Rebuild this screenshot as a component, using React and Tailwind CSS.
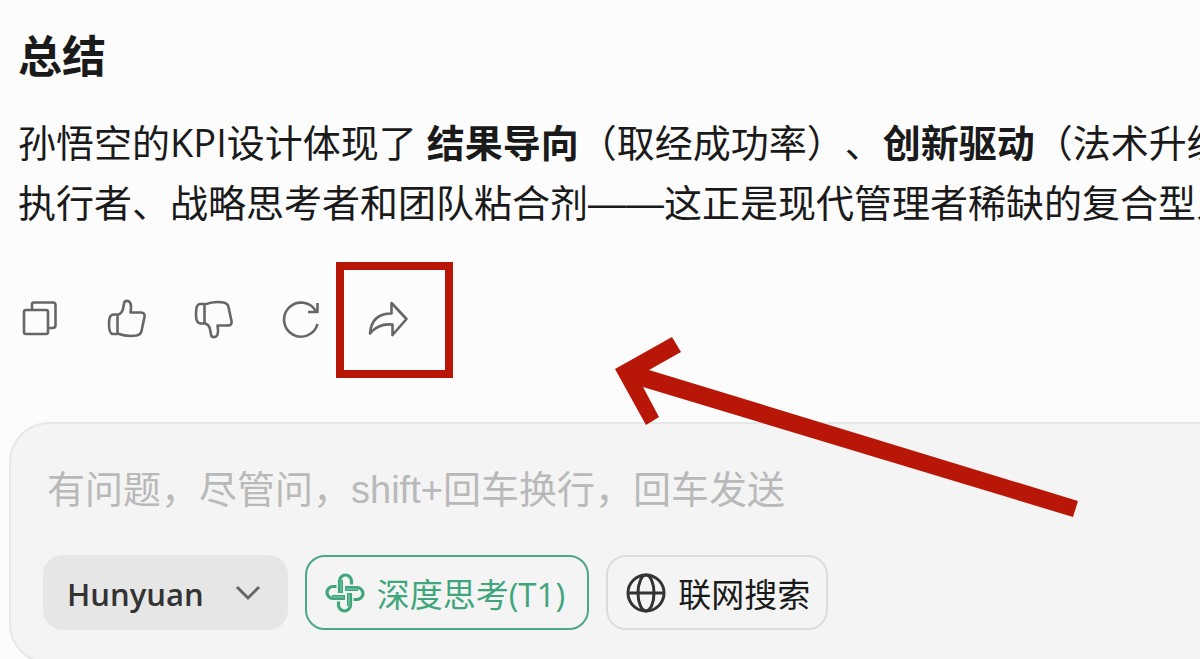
import React, { useState } from 'react';

const iconProps = {
    viewBox: '0 0 40 40',
    fill: 'none',
    stroke: 'currentColor',
    strokeWidth: 2.6,
    strokeLinejoin: 'round',
    'aria-hidden': true,
    className: 'h-10 w-10',
};

const thumbPath =
    'M10.5 16C13 15 15.5 12.500 16 10L17 4.500C17.500 1 22 1 23.500 4.500C24.500 7.500 24 10.500 23.500 13.500H34C37 13.500 38 15.500 37.500 18L34.500 32C34 35 32 36 29.500 36.500C23 37.500 16 36.500 10.500 34.500ZM10.500 15.500H7C2.500 15.500 2 20 2 25C2 30 2.500 35 6 35H10.500';

function CopyIcon() {
    return (
        <svg {...iconProps}>
            <rect x="4" y="11" width="24" height="24" rx="2" />
            <path d="M12 10V5.500Q12 3.500 14 3.500H33Q35.500 3.500 35.500 6V26Q35.500 29 32.500 29H29" />
        </svg>
    );
}

function LikeIcon() {
    return (
        <svg {...iconProps}>
            <path d={thumbPath} />
        </svg>
    );
}

function DislikeIcon() {
    return (
        <svg {...iconProps}>
            <path d={thumbPath} transform="matrix(1 0 0 -1 0 40)" />
        </svg>
    );
}

function RetryIcon() {
    return (
        <svg {...iconProps}>
            <path d="M36.500 25A17 17 0 1 1 35 12.500M36.500 4V13H27" />
        </svg>
    );
}

function ShareIcon() {
    return (
        <svg {...iconProps}>
            <path d="M2 34.500C3 21 11 14.500 23.500 14.500V4L38.500 20L24.500 36V25.500C14 24.500 7.500 27.500 2 34.500Z" />
        </svg>
    );
}

// Four identical hooks turned around the centre, each with a broad stem
function KnotIcon() {
    return (
        <svg viewBox="0 0 40 40" fill="none" stroke="currentColor" aria-hidden="true" className="h-10 w-10 shrink-0">
            {[0, 90, 180, 270].map((angle) => (
                <g key={angle} transform={`rotate(${angle} 20 20)`}>
                    <path d="M14.5 20V8a6 6 0 0 1 12 0V11.500" strokeWidth="3.2" />
                    <path d="M15.500 20V7" strokeWidth="5" />
                    <path d="M16 19V7.500" stroke="#6dbf9e" strokeWidth="1.600" />
                </g>
            ))}
        </svg>
    );
}

function GlobeIcon() {
    return (
        <svg viewBox="0 0 40 40" fill="none" stroke="#333" strokeWidth="3" aria-hidden="true" className="h-10 w-10 shrink-0">
            <circle cx="20" cy="20" r="18" />
            <ellipse cx="20" cy="20" rx="8" ry="18" />
            <path d="M2 20h36" />
        </svg>
    );
}

const actions = [
    { label: '复制', Icon: CopyIcon },
    { label: '赞', Icon: LikeIcon },
    { label: '踩', Icon: DislikeIcon },
    { label: '重新生成', Icon: RetryIcon },
    { label: '分享', Icon: ShareIcon, marked: true },
];

function App() {
    const [message, setMessage] = useState('');
    const [deepThink, setDeepThink] = useState(true);

    return (
        <div className="relative h-screen overflow-hidden bg-[#fcfcfc] font-['Open_Sans','Noto_Sans_CJK_SC',sans-serif] text-[#1a1a1a]">
            {/* Answer */}
            <main className="pt-6 pl-[18px]">
                <h2 className="text-[44px] leading-[64px] font-bold">总结</h2>
                <p className="mt-6 text-[38px] leading-[60px] whitespace-nowrap [text-spacing-trim:space-all]">
                    孙悟空的KPI设计体现了 <strong>结果导向</strong>（取经成功率）、<strong>创新驱动</strong>（法术升级）
                    <br />
                    执行者、战略思考者和团队粘合剂
                    <span className="font-['Liberation_Sans',sans-serif]">——</span>
                    这正是现代管理者稀缺的复合型人才
                </p>
            </main>

            {/* Action bar */}
            <div className="mt-[65px] flex gap-[47px] pl-5 text-[#666]">
                {actions.map(({ label, Icon, marked }) => (
                    <button key={label} type="button" aria-label={label} className="relative h-10 w-10">
                        <Icon />
                        {marked && (
                            <span className="absolute -top-[37px] -left-8 h-[116px] w-[117px] border-8 border-[#b81606]" />
                        )}
                    </button>
                ))}
            </div>

            {/* Composer */}
            <form className="mt-[83px] ml-[9px] rounded-l-[40px] border-2 border-r-0 border-[#e7e7e7] bg-[#f4f4f4] pt-9 pb-8 pl-8">
                <input
                    type="text"
                    aria-label="输入问题"
                    placeholder="有问题，尽管问，shift+回车换行，回车发送"
                    value={message}
                    onChange={(e) => setMessage(e.target.value)}
                    className="ml-1 block h-[60px] w-full bg-transparent font-['Liberation_Sans','Noto_Sans_CJK_SC',sans-serif] text-[38px] placeholder:text-[#b9b9b9] focus:outline-none"
                />
                <div className="mt-[35px] flex gap-[17px] text-[33px]">
                    <button type="button" className="flex h-[75px] items-center gap-7 rounded-[20px] bg-[#e6e6e6] px-6 text-[31px] font-semibold text-[#333]">
                        <span className="pt-1">Hunyuan</span>
                        <svg viewBox="0 0 32 32" fill="none" stroke="#666" strokeWidth="3" aria-hidden="true" className="h-8 w-8">
                            <path d="M5 10L16 21L27 10" />
                        </svg>
                    </button>
                    <button
                        type="button"
                        aria-pressed={deepThink}
                        onClick={() => setDeepThink(!deepThink)}
                        className="flex h-[75px] items-center gap-3 rounded-[20px] border-2 border-[#4ba883] pr-[22px] pl-[18px] text-[#3fa67c]"
                    >
                        <KnotIcon />
                        <span className="pt-1">深度思考(T1)</span>
                    </button>
                    <button type="button" className="flex h-[75px] items-center gap-3 rounded-[20px] border-2 border-[#dcdcdc] pr-4 pl-[18px]">
                        <GlobeIcon />
                        <span className="pt-1">联网搜索</span>
                    </button>
                </div>
            </form>

            {/* Pointer to the share button */}
            <svg viewBox="0 0 464 90" aria-hidden="true" className="absolute top-[336px] left-[615px] h-[90px] w-[464px] overflow-visible">
                <path d="M0 33L57 1L66 16L34 34L463 165L458 181L28 51L44 81L31 89Z" fill="#b81606" />
            </svg>
        </div>
    );
}

export default App;
